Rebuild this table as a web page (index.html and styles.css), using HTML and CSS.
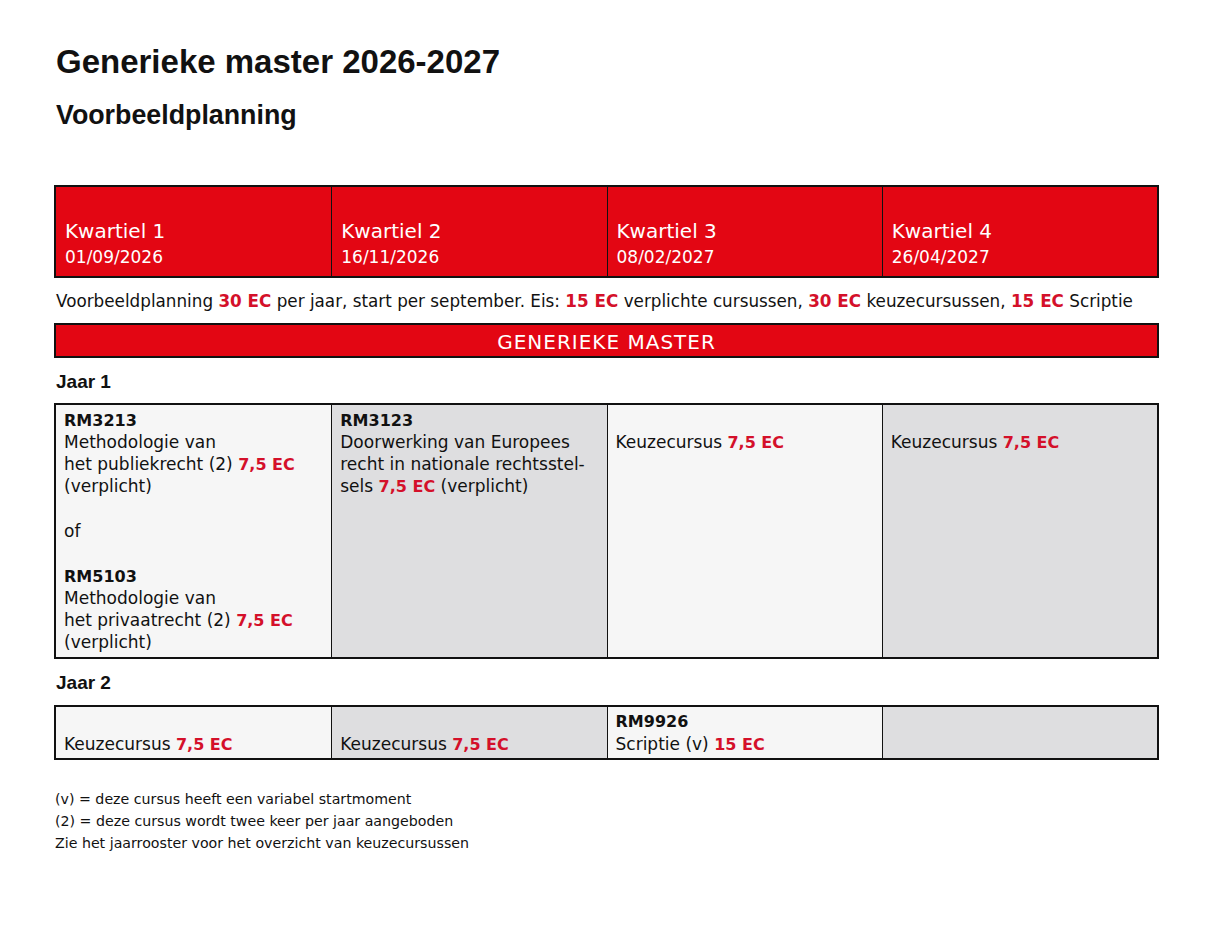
FILE: index.html
```html
<!DOCTYPE html>
<html lang="nl">
<head>
<meta charset="utf-8">
<title>Generieke master 2026-2027</title>
<link rel="stylesheet" href="styles.css">
</head>
<body>
<main class="page">
  <h1 class="title">Generieke master 2026-2027</h1>
  <h2 class="subtitle">Voorbeeldplanning</h2>

  <div class="grid head">
    <div class="hcell"><span class="q">Kwartiel 1</span><span class="d">01/09/2026</span></div>
    <div class="hcell"><span class="q">Kwartiel 2</span><span class="d">16/11/2026</span></div>
    <div class="hcell"><span class="q">Kwartiel 3</span><span class="d">08/02/2027</span></div>
    <div class="hcell"><span class="q">Kwartiel 4</span><span class="d">26/04/2027</span></div>
  </div>

  <p class="info">Voorbeeldplanning <b class="ec">30 EC</b> per jaar, start per september. Eis: <b class="ec">15 EC</b> verplichte cursussen, <b class="ec">30 EC</b> keuzecursussen, <b class="ec">15 EC</b> Scriptie</p>

  <div class="banner">GENERIEKE MASTER</div>

  <h3 class="year">Jaar 1</h3>
  <div class="grid body">
    <div class="cell light">
      <b class="code">RM3213</b><br>
      Methodologie van<br>
      het publiekrecht (2) <b class="ec">7,5 EC</b><br>
      (verplicht)<br>
      <br>
      of<br>
      <br>
      <b class="code">RM5103</b><br>
      Methodologie van<br>
      het privaatrecht (2) <b class="ec">7,5 EC</b><br>
      (verplicht)
    </div>
    <div class="cell grey">
      <b class="code">RM3123</b><br>
      Doorwerking van Europees<br>
      recht in nationale rechtsstel-<br>
      sels <b class="ec">7,5 EC</b> (verplicht)
    </div>
    <div class="cell light">
      <br>
      Keuzecursus <b class="ec">7,5 EC</b>
    </div>
    <div class="cell grey">
      <br>
      Keuzecursus <b class="ec">7,5 EC</b>
    </div>
  </div>

  <h3 class="year year2">Jaar 2</h3>
  <div class="grid body body2">
    <div class="cell light">
      <br>
      Keuzecursus <b class="ec">7,5 EC</b>
    </div>
    <div class="cell grey">
      <br>
      Keuzecursus <b class="ec">7,5 EC</b>
    </div>
    <div class="cell light">
      <b class="code">RM9926</b><br>
      Scriptie (v) <b class="ec">15 EC</b>
    </div>
    <div class="cell grey"></div>
  </div>

  <div class="notes">
    <p>(v) = deze cursus heeft een variabel startmoment</p>
    <p>(2) = deze cursus wordt twee keer per jaar aangeboden</p>
    <p>Zie het jaarrooster voor het overzicht van keuzecursussen</p>
  </div>
</main>
</body>
</html>
```

FILE: styles.css
```css
html, body {
  margin: 0;
  padding: 0;
  background: #ffffff;
}

body {
  font-family: "DejaVu Sans", "Liberation Sans", sans-serif;
  color: #111111;
}

.page {
  width: 1105px;
  margin-left: 54px;
  padding-top: 42px;
}

.title {
  margin: 0 0 0 2px;
  font-family: "Liberation Sans", Arial, sans-serif;
  font-size: 33px;
  line-height: 40px;
  font-weight: 700;
}

.subtitle {
  margin: 17px 0 0 2px;
  font-family: "Liberation Sans", Arial, sans-serif;
  font-size: 26.8px;
  line-height: 32px;
  font-weight: 700;
}

.grid {
  display: grid;
  grid-template-columns: repeat(4, 1fr);
  border: 2px solid #111111;
}

.grid > div + div {
  border-left: 1px solid #111111;
}

.head {
  box-sizing: border-box;
  margin-top: 54px;
  background: #e30613;
  color: #ffffff;
  height: 93px;
}

.hcell {
  display: flex;
  flex-direction: column;
  justify-content: flex-end;
  padding: 0 9px 7px;
}

.hcell .q {
  font-size: 20px;
  line-height: 28px;
}

.hcell .d {
  font-size: 17px;
  line-height: 24px;
}

.info {
  margin: 11px 0 0 2px;
  font-size: 16.8px;
  line-height: 24px;
}

.ec {
  color: #d4102a;
  font-weight: 700;
}

.banner {
  margin-top: 10px;
  background: #e30613;
  border: 2px solid #111111;
  color: #ffffff;
  text-align: center;
  font-size: 20px;
  letter-spacing: 1px;
  line-height: 26px;
  padding-top: 4px;
  padding-bottom: 1px;
}

.year {
  margin: 12px 0 0 2px;
  font-family: "Liberation Sans", Arial, sans-serif;
  font-size: 19px;
  line-height: 24px;
  font-weight: 700;
}

.year2 {
  margin-top: 12px;
}

.body {
  margin-top: 9px;
}

.body2 {
  margin-top: 10px;
}

.cell {
  padding: 3.5px 8px 3.2px 8px;
  font-size: 17px;
  line-height: 22.3px;
}

.cell .code {
  font-size: 16px;
  line-height: 1;
  font-weight: 700;
  color: #111111;
}

.cell .ec {
  font-size: 16px;
  line-height: 1;
}

.light {
  background: #f6f6f6;
}

.grey {
  background: #dedee0;
}

.notes {
  margin-top: 28px;
  margin-left: 1px;
  font-size: 14.2px;
  line-height: 22px;
}

.notes p {
  margin: 0;
}
```
